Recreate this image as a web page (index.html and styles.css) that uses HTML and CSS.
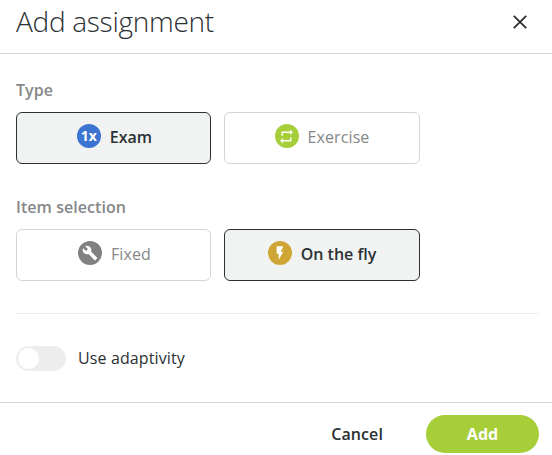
FILE: index.html
```html
<!DOCTYPE html>
<html lang="en"><head>
	<meta charset="utf-8">
	<title>Add assignment</title>
	<link rel="stylesheet" href="styles.css">
</head><body>
<header class="dialog-header">
	<h1>Add assignment</h1>
	<button class="close" aria-label="Close"><svg width="14" height="14" viewBox="0 0 14 14"><path d="M.8 .8L13.2 13.2M13.2 .8L.8 13.2"/></svg></button>
</header>
<main class="dialog-body">
	<section class="field">
		<h2>Type</h2>
		<div class="options">
			<button class="option selected exam"><span class="icon blue">1x</span><span class="name">Exam</span></button>
			<button class="option exercise">
				<span class="icon green"><svg width="17" height="17" viewBox="0 0 24 24"><path d="M17 17H7V14L3 18L7 22V19H19V13H17M7 7H17V10L21 6L17 2V5H5V11H7Z"/></svg></span>
				<span class="name">Exercise</span>
			</button>
		</div>
	</section>
	<section class="field">
		<h2>Item selection</h2>
		<div class="options">
			<button class="option fixed">
				<span class="icon gray"><svg width="16" height="16" viewBox="0 0 24 24"><path d="M22.7 19L13.6 9.9C14.5 7.6 14 4.9 12.1 3C10.1 1 7.1 .6 4.7 1.7L9 6L6 9L1.6 4.7C.4 7.1 .9 10.1 2.9 12.1C4.8 14 7.5 14.5 9.8 13.6L18.9 22.7C19.3 23.1 19.9 23.1 20.3 22.7L22.6 20.4C23.1 20 23.1 19.3 22.7 19Z"/></svg></span>
				<span class="name">Fixed</span>
			</button>
			<button class="option selected fly">
				<span class="icon gold"><svg width="16" height="16" viewBox="0 0 24 24"><path d="M7 2V13H10V22L17 10H13L17 2Z"/></svg></span>
				<span class="name">On the fly</span>
			</button>
		</div>
	</section>
	<label class="adaptivity"><input type="checkbox" class="switch"><span>Use adaptivity</span></label>
</main>
<footer class="dialog-footer">
	<button class="cancel">Cancel</button>
	<button class="add">Add</button>
</footer>
</body></html>
```
FILE: styles.css
```css
* { box-sizing:border-box; font-family:'Open Sans', sans-serif }
body { margin:0; height:455px; overflow:hidden; display:flex; flex-direction:column; background:#fff; color:#2b3033; font-size:16px }
h1, h2 { margin:0 }
button { border:0; padding:0; background:none; color:inherit; font-size:16px; cursor:pointer }
svg { display:block; fill:#fff }

.dialog-header { display:flex; justify-content:space-between; height:54px; padding:0 25px 0 16px; border-bottom:1px solid #d3d5d5 }
h1 { font-size:28px; font-weight:300; line-height:42px; letter-spacing:-0.28px }
.close { height:44px }
.close svg { fill:none; stroke:#2b3033; stroke-width:1.8 }

.dialog-body { height:348px; padding:25px 13px 0 16px }
.field { height:117px }
h2 { height:33px; color:#858788; font-size:16px; font-weight:600; line-height:22px; letter-spacing:0.06px }
.options { display:grid; grid-template-columns:195px 196px; column-gap:13px }
.option { display:flex; align-items:center; justify-content:center; gap:9px; height:52px; border:1px solid #d3d5d5; border-radius:6px; color:#858788; line-height:22px }
.selected { border-color:#2b3033; background:#f1f3f3; color:#2b3033; font-weight:600 }
.exam, .fixed { padding-left:2px }
.name { margin-bottom:2px }
.exercise .name, .fixed .name { letter-spacing:0.1px }

.icon { display:flex; align-items:center; justify-content:center; width:24px; height:24px; margin-bottom:4px; border-radius:50%; color:#fff; font-size:14px; font-weight:700; line-height:24px }
.blue { background:#3b74d1 }
.green { background:#a6ce39 }
.gray { background:#7f8182 }
.gold { background:#cfa535 }

.adaptivity { display:flex; align-items:center; gap:12px; height:90px; border-top:1px solid #ececec }
.adaptivity span { margin-bottom:2px; letter-spacing:0.12px }
.switch { appearance:none; width:50px; height:25px; margin:0; padding:2px; border-radius:13px; background:#ededed }
.switch::before { content:''; display:block; width:21px; height:21px; border-radius:50%; background:#fff }
.switch:checked { background:#a6ce39 }
.switch:checked::before { margin-left:25px }

.dialog-footer { display:flex; justify-content:flex-end; gap:43px; height:53px; padding:12px 13px 0 0; border-top:1px solid #d3d5d5 }
.cancel, .add { height:38px; font-weight:600 }
.cancel { letter-spacing:0.1px }
.add { width:113px; border-radius:19px; background:#a6ce39; color:#fff; font-weight:700 }
```
